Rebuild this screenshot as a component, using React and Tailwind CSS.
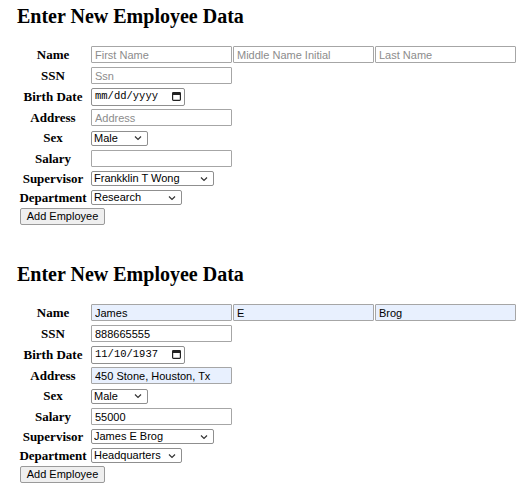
import React from 'react';

const serif = "font-['Liberation_Serif','Times_New_Roman',serif]";
const sans = "font-['Liberation_Sans',Arial,sans-serif]";

const textInput = `${sans} h-[17px] border border-[#a6a6a6] rounded-[1px] px-[3px] text-[11px] text-black placeholder:text-[#8c8c8c] outline-none`;

const Label = ({ children, h }) => (
  <div className={`${serif} flex items-center justify-center text-[13px] font-bold text-black ${h}`}>
    {children}
  </div>
);

const Field = ({ children, h }) => (
  <div className={`flex items-center ${h}`}>{children}</div>
);

const Chevron = () => (
  <svg width="8" height="5" viewBox="0 0 8 5" className="pointer-events-none absolute right-[6px] top-1/2 -translate-y-1/2">
    <path d="M1 1l3 3 3-3" fill="none" stroke="#333" strokeWidth="1.2" />
  </svg>
);

const Select = ({ width, value, options }) => (
  <div className={`relative ${width}`}>
    <select
      defaultValue={value}
      className={`${sans} block w-full h-[15px] appearance-none border border-[#8f8f8f] rounded-[2px] bg-white pl-[2px] text-[11px] leading-[13px] text-black outline-none`}
    >
      {options.map(o => (
        <option key={o}>{o}</option>
      ))}
    </select>
    <Chevron />
  </div>
);

const CalendarIcon = () => (
  <svg width="9" height="9" viewBox="0 0 9 9">
    <rect x="0.6" y="0.6" width="7.8" height="7.8" rx="0.8" fill="none" stroke="#222" strokeWidth="1.2" />
    <rect x="0.6" y="0.6" width="7.8" height="2.4" fill="#222" />
  </svg>
);

const DateField = ({ value }) => (
  <div className="flex h-[18px] w-[94px] items-center justify-between border border-[#8f8f8f] rounded-[2px] bg-white pl-[3px] pr-[3px]">
    <span className="font-['Liberation_Mono','Courier_New',monospace] text-[10.5px] text-black">{value}</span>
    <CalendarIcon />
  </div>
);

const EmployeeForm = ({ data, className }) => {
  const filled = 'bg-[#e8f0fe]';
  const plain = 'bg-white';
  return (
    <form className={className} onSubmit={e => e.preventDefault()}>
      <h2 className={`${serif} mt-[5px] text-[20px] leading-[23px] font-bold text-black`}>
        Enter New Employee Data
      </h2>

      <div className="mt-[16px] ml-[1px] grid grid-cols-[70px_1fr] gap-x-[3px]">
        <Label h="h-[21px]">Name</Label>
        <Field h="h-[21px]">
          <div className="flex gap-[1px]">
            <input className={`${textInput} w-[141px] ${data ? filled : plain}`} placeholder="First Name" defaultValue={data?.first} />
            <input className={`${textInput} w-[141px] ${data ? filled : plain}`} placeholder="Middle Name Initial" defaultValue={data?.middle} />
            <input className={`${textInput} w-[141px] ${data ? filled : plain}`} placeholder="Last Name" defaultValue={data?.last} />
          </div>
        </Field>

        <Label h="h-[21px]">SSN</Label>
        <Field h="h-[21px]">
          <input className={`${textInput} w-[141px] bg-white`} placeholder="Ssn" defaultValue={data?.ssn} />
        </Field>

        <Label h="h-[21px]">Birth Date</Label>
        <Field h="h-[21px]">
          <DateField value={data ? '11/10/1937' : 'mm/dd/yyyy'} />
        </Field>

        <Label h="h-[21px]">Address</Label>
        <Field h="h-[21px]">
          <input className={`${textInput} w-[141px] ${data ? filled : plain}`} placeholder="Address" defaultValue={data?.address} />
        </Field>

        <Label h="h-[20px]">Sex</Label>
        <Field h="h-[20px]">
          <Select width="w-[57px]" value="Male" options={['Male', 'Female']} />
        </Field>

        <Label h="h-[21px]">Salary</Label>
        <Field h="h-[21px]">
          <input className={`${textInput} w-[141px] bg-white`} defaultValue={data?.salary} />
        </Field>

        <Label h="h-[19px]">Supervisor</Label>
        <Field h="h-[19px]">
          <Select
            width="w-[123px]"
            value={data ? 'James E Brog' : 'Frankklin T Wong'}
            options={['Frankklin T Wong', 'James E Brog']}
          />
        </Field>

        <Label h="h-[19px]">Department</Label>
        <Field h="h-[19px]">
          <Select
            width="w-[91px]"
            value={data ? 'Headquarters' : 'Research'}
            options={['Research', 'Headquarters', 'Administration']}
          />
        </Field>

        <div className="col-span-2 flex h-[19px] items-center">
          <button
            type="submit"
            className={`${sans} ml-[2px] h-[17px] w-[85px] border border-[#9a9a9a] rounded-[2px] bg-[#efefef] text-[11px] leading-[15px] text-black`}
          >
            Add Employee
          </button>
        </div>
      </div>
    </form>
  );
};

export default function App() {
  return (
    <div className="min-h-[493px] w-[532px] bg-white pl-[17px]">
      <EmployeeForm />
      <EmployeeForm
        className="mt-[37px]"
        data={{
          first: 'James',
          middle: 'E',
          last: 'Brog',
          ssn: '888665555',
          address: '450 Stone, Houston, Tx',
          salary: '55000'
        }}
      />
    </div>
  );
}
